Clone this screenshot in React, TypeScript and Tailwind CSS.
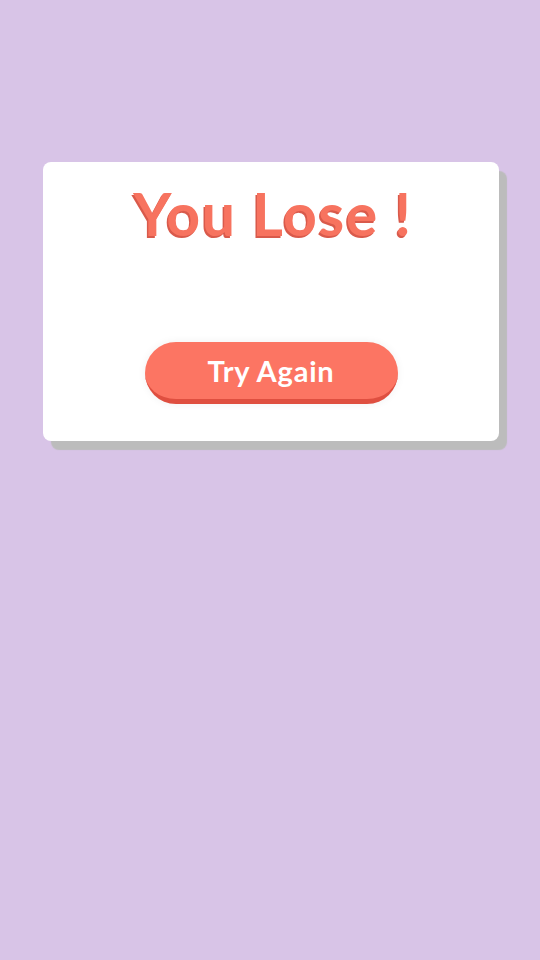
export default function App() {
  return (
    <div className="min-h-[960px] w-full bg-[#d8c4e7] pt-[162px] px-[41px]" style={{ fontFamily: '"Lato", "Liberation Sans", sans-serif' }}>
      <div className="w-[456px] h-[279px] ml-[2px] rounded-lg bg-white shadow-[8px_9px_1px_#bcbcbc] flex flex-col items-center">
        <h1 className="mt-[16px] ml-[4px] text-[59px] leading-[72px] font-bold text-[#f7735f] [text-shadow:-1.5px_2px_0_#d95a4b] tracking-[1.5px]">
          You Lose !
        </h1>
        <button className="mt-[92px] w-[253px] h-[62px] rounded-full bg-[#fc7563] border-b-[5px] border-[#df4f40] text-white text-[29px] font-bold tracking-[0.8px] shadow-[0_0_8px_rgba(0,0,0,0.06)]">
          Try Again
        </button>
      </div>
    </div>
  );
}
